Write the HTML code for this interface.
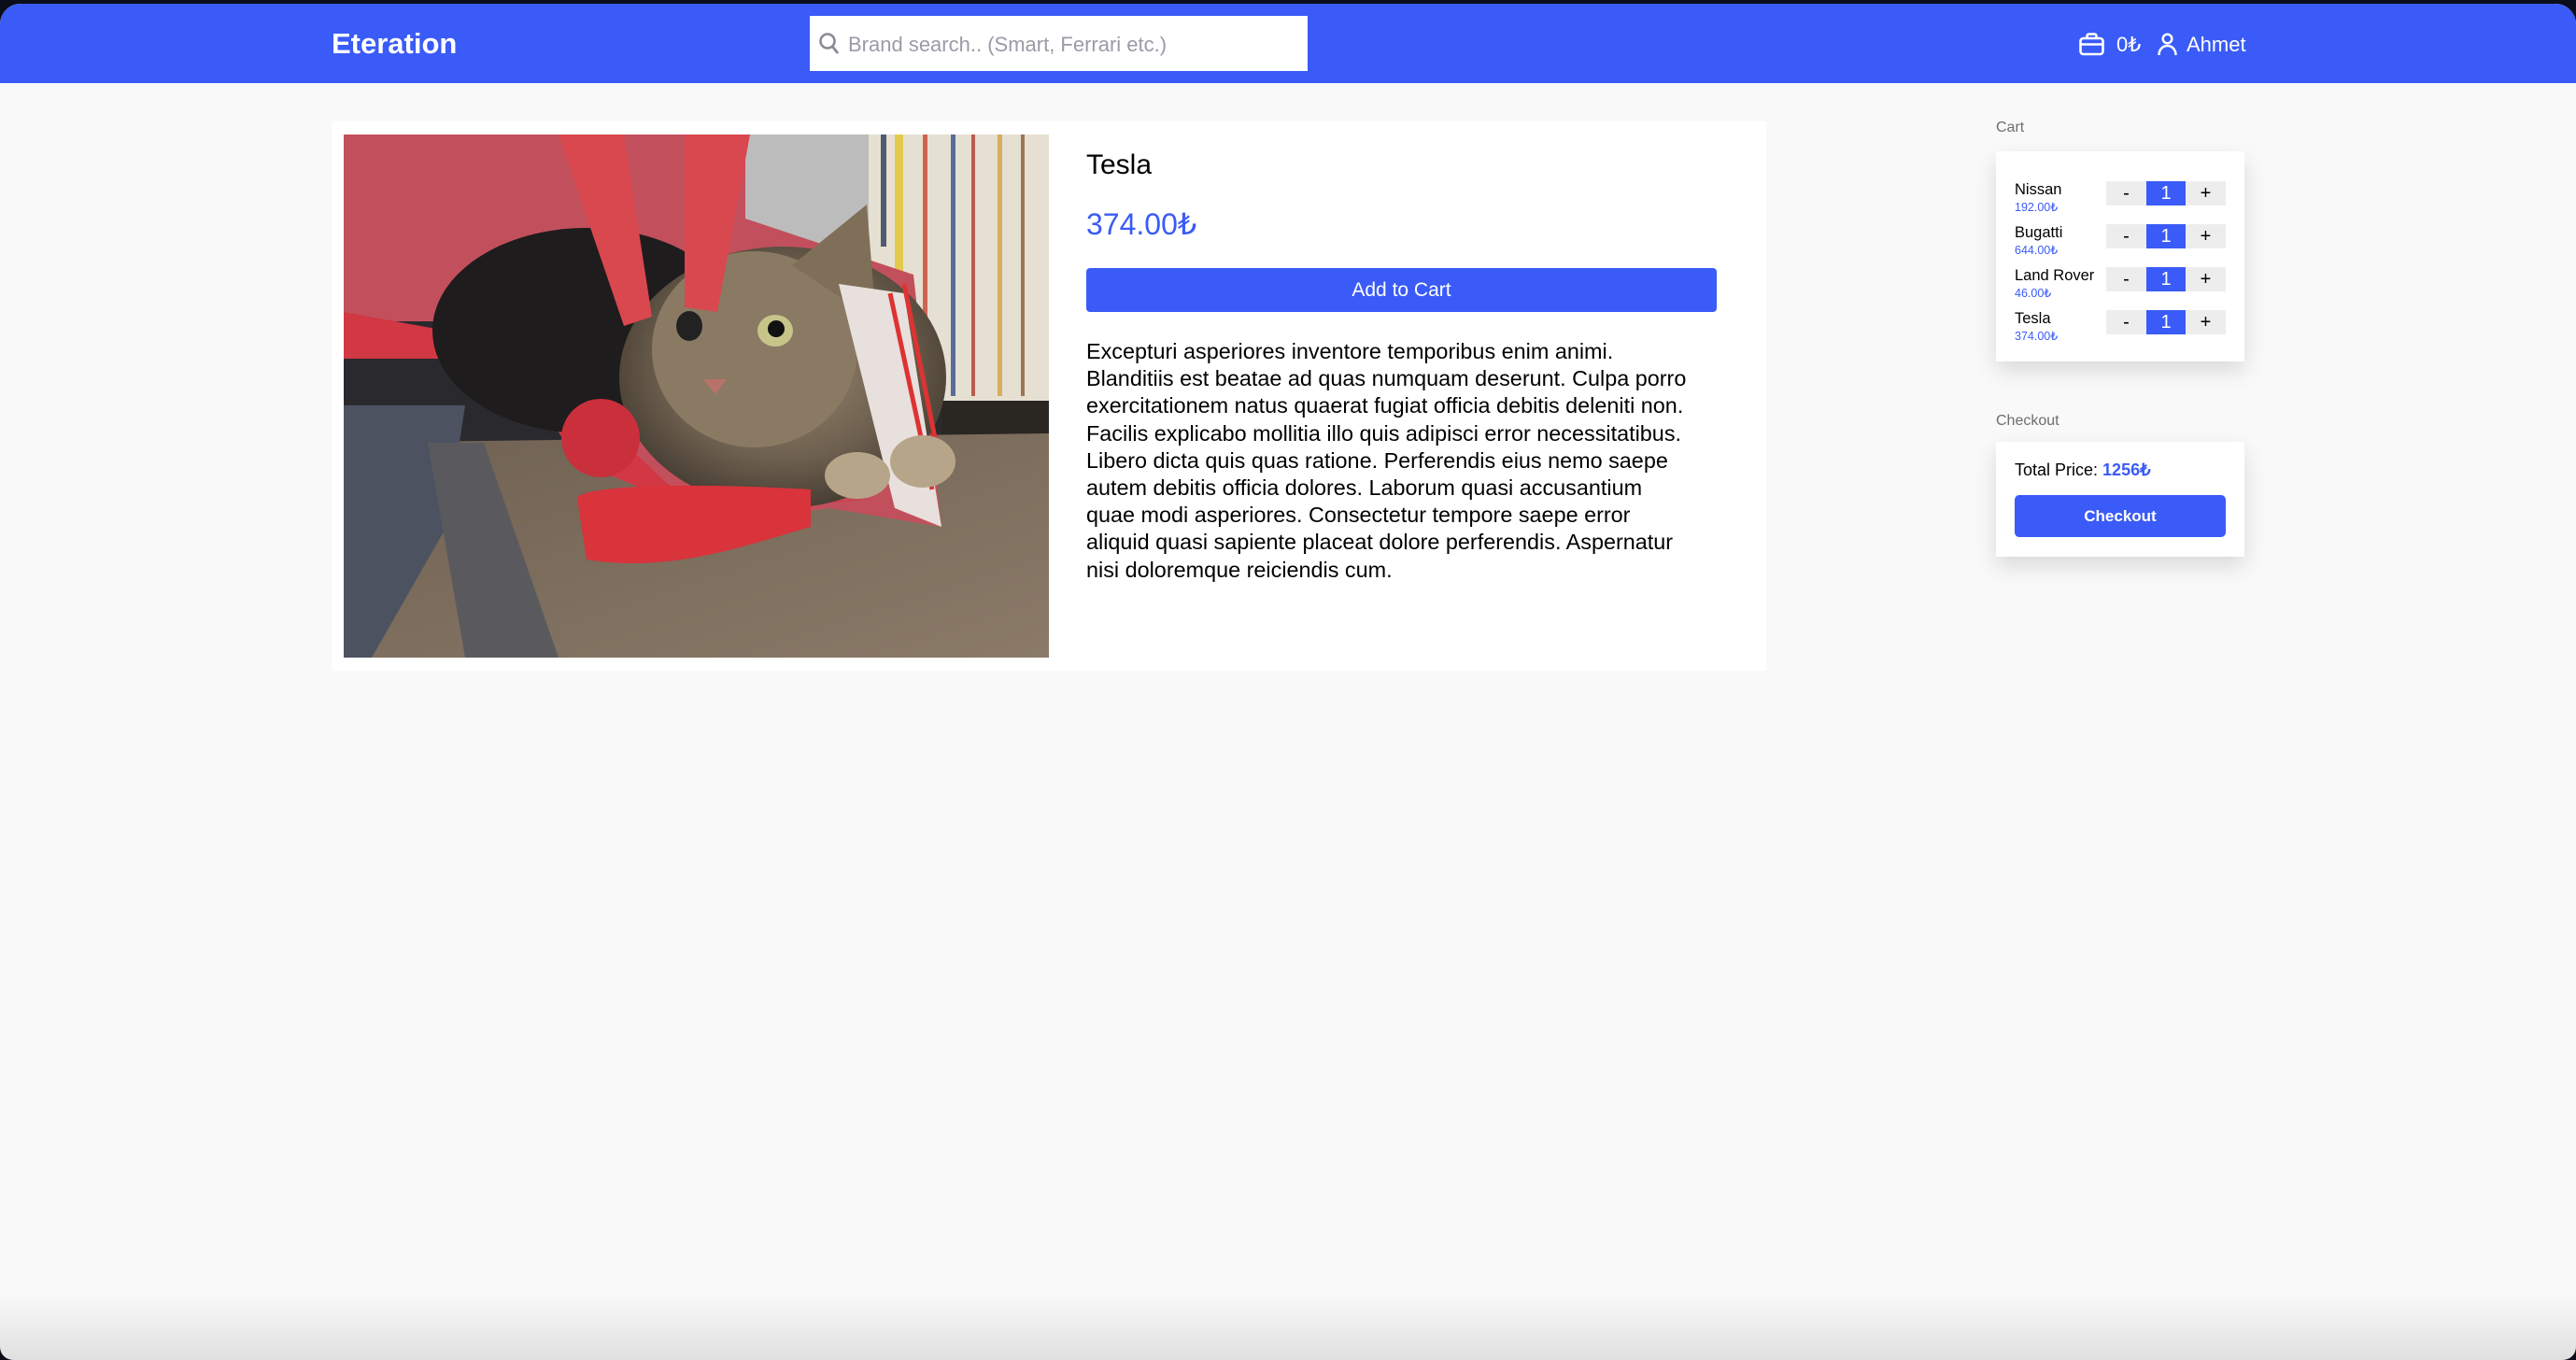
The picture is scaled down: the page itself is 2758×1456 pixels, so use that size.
<!DOCTYPE html>
<html><head><meta charset="utf-8">
<style>
*{margin:0;padding:0;box-sizing:border-box}
html,body{width:2758px;height:1456px;overflow:hidden;background:#0b0d1a}
body{font-family:"Liberation Sans",sans-serif;position:relative}
.win{position:absolute;left:0;top:4px;width:2758px;height:1452px;background:#f9f9f9;border-radius:22px 22px 14px 14px;overflow:hidden}
.hdr{position:absolute;left:0;top:0;width:2758px;height:85px;background:#3a5bf7}
.logo{position:absolute;left:355px;top:25px;color:#fff;font-weight:bold;font-size:31px}
.search{position:absolute;left:867px;top:13px;width:533px;height:59px;background:#fff}
.search span{position:absolute;left:41px;top:18px;font-size:22px;color:#9a9ba6}
.search svg{position:absolute;left:9px;top:17px}
.hv{position:absolute;color:#fff;font-size:22px}
.card{position:absolute;left:355px;top:126px;width:1536px;height:588px;background:#fff}
.img{position:absolute;left:13px;top:14px;width:755px;height:560px;overflow:hidden;background:#333}
.title{position:absolute;left:808px;top:30px;font-size:30px;color:#000}
.price{position:absolute;left:808px;top:91px;font-size:32px;color:#3a5bf7}
.btn{position:absolute;left:808px;top:157px;width:675px;height:47px;background:#3a5bf7;border-radius:4px;color:#fff;font-size:21px;text-align:center;line-height:47px}
.desc{position:absolute;left:808px;top:232px;width:720px;font-size:23.4px;line-height:29.2px;color:#000;white-space:nowrap}
.lbl{position:absolute;left:2137px;font-size:16px;color:#6e6e6e}
.box{position:absolute;left:2137px;width:266px;background:#fff;box-shadow:0 10px 22px rgba(0,0,0,0.13)}
.row{position:absolute;left:20px;width:230px;height:40px}
.nm{position:absolute;left:0;top:0;font-size:16.5px;color:#000;white-space:nowrap}
.pr{position:absolute;left:0;top:20px;font-size:12.5px;color:#3a5bf7}
.q{position:absolute;top:0;height:26px;width:43px;text-align:center;line-height:26px;font-size:20px;background:#eeedee;color:#000}
.tp{position:absolute;left:20px;top:20px;font-size:18px;color:#000}
.cb{position:absolute;left:20px;top:57px;width:226px;height:45px;background:#3a5bf7;border-radius:5px;color:#fff;font-weight:bold;font-size:17px;text-align:center;line-height:45px}
.bot{position:absolute;left:0;bottom:0;width:2758px;height:70px;background:linear-gradient(to bottom,rgba(0,0,0,0),rgba(0,0,0,0.10))}
</style></head><body>
<div class="win">
<div class="hdr">
 <div class="logo">Eteration</div>
 <div class="search"><svg width="24" height="26" viewBox="0 0 24 26"><circle cx="10" cy="10" r="7.5" fill="none" stroke="#8a8b96" stroke-width="2.6"/><line x1="15.5" y1="16" x2="21" y2="23" stroke="#8a8b96" stroke-width="2.8"/></svg><span>Brand search.. (Smart, Ferrari etc.)</span></div>
 <svg style="position:absolute;left:2226px;top:31px" width="27" height="25" viewBox="0 0 27 25"><rect x="1.5" y="6" width="24" height="17" rx="3" fill="none" stroke="#fff" stroke-width="2.6"/><path d="M8.5 6V3.5a2 2 0 0 1 2-2h6a2 2 0 0 1 2 2V6" fill="none" stroke="#fff" stroke-width="2.6"/><line x1="1.5" y1="12.5" x2="25.5" y2="12.5" stroke="#fff" stroke-width="2.4"/></svg>
 <div class="hv" style="left:2266px;top:31px">0₺</div>
 <svg style="position:absolute;left:2310px;top:31px" width="21" height="25" viewBox="0 0 21 25"><circle cx="10.5" cy="6.5" r="4.8" fill="none" stroke="#fff" stroke-width="2.5"/><path d="M1.5 24c0-6 4-10 9-10s9 4 9 10" fill="none" stroke="#fff" stroke-width="2.5"/></svg>
 <div class="hv" style="left:2341px;top:31px">Ahmet</div>
</div>

<div class="card">
 <div class="img">
 <svg width="755" height="560" viewBox="0 0 755 560">
  <defs>
   <radialGradient id="cat" cx="0.5" cy="0.45" r="0.6"><stop offset="0" stop-color="#9a8770"/><stop offset="0.6" stop-color="#6e604f"/><stop offset="1" stop-color="#3d352c"/></radialGradient>
   <linearGradient id="carpet" x1="0" y1="0" x2="1" y2="1"><stop offset="0" stop-color="#6f6152"/><stop offset="1" stop-color="#8b7a68"/></linearGradient>
  </defs>
  <rect width="755" height="560" fill="#2a2a2e"/>
  <rect x="430" y="0" width="140" height="120" fill="#bdbcbd"/>
  <rect x="562" y="0" width="193" height="290" fill="#e6e0d2"/>
  <g opacity="0.8"><rect x="575" y="0" width="6" height="120" fill="#2a3a5a"/><rect x="590" y="0" width="9" height="270" fill="#e4c52a"/><rect x="620" y="0" width="5" height="280" fill="#c9452f"/><rect x="650" y="0" width="5" height="280" fill="#34508a"/><rect x="672" y="0" width="4" height="280" fill="#b03d2c"/><rect x="700" y="0" width="5" height="280" fill="#d8a040"/><rect x="725" y="0" width="4" height="280" fill="#8a5a38"/></g>
  <rect x="640" y="285" width="115" height="40" fill="#2a2622"/>
  <polygon points="0,330 755,320 755,560 0,560" fill="url(#carpet)"/>
  <polygon points="0,290 130,290 110,420 30,560 0,560" fill="#4c5260"/>
  <polygon points="90,330 150,330 230,560 130,560" fill="#5a5a5e"/>
  <path d="M0 0 L430 0 L430 90 L610 150 L640 420 L520 400 L380 420 L250 330 L120 200 L0 200Z" fill="#c2505c"/>
  <path d="M0 190 L110 210 L230 310 L300 330 L380 405 L570 390 L370 400 L250 350 L180 240 L0 240Z" fill="#d23744"/>
  <ellipse cx="260" cy="210" rx="165" ry="110" fill="#1e1c1c"/>
  <ellipse cx="470" cy="260" rx="175" ry="140" fill="url(#cat)"/>
  <ellipse cx="440" cy="230" rx="110" ry="105" fill="#8a7a64"/>
  <path d="M480 140 L560 75 L570 200Z" fill="#7f6e58"/>
  <path d="M530 160 L600 170 L640 420 L590 400Z" fill="#e8e0dc"/>
  <g stroke="#d33" stroke-width="5"><line x1="600" y1="160" x2="640" y2="360"/><line x1="585" y1="170" x2="630" y2="380"/></g>
  <ellipse cx="462" cy="210" rx="19" ry="17" fill="#c7c48a"/><circle cx="463" cy="208" r="9" fill="#111"/>
  <ellipse cx="370" cy="205" rx="14" ry="16" fill="#222"/>
  <path d="M385 262 L410 262 L398 278Z" fill="#b8726a"/>
  <ellipse cx="550" cy="365" rx="35" ry="25" fill="#b7a58a"/><ellipse cx="620" cy="350" rx="35" ry="28" fill="#b7a58a"/>
  <path d="M230 0 L300 0 L330 195 L300 205Z" fill="#d9474f"/>
  <path d="M365 0 L435 0 L400 190 L365 185Z" fill="#d9474f"/>
  <circle cx="275" cy="325" r="42" fill="#c9303c"/>
  <path d="M250 390 C250 380 320 370 500 380 L500 420 C430 440 350 470 260 455Z" fill="#d9333b"/>
 </svg>
 </div>
 <div class="title">Tesla</div>
 <div class="price">374.00₺</div>
 <div class="btn">Add to Cart</div>
 <div class="desc">Excepturi asperiores inventore temporibus enim animi.<br>Blanditiis est beatae ad quas numquam deserunt. Culpa porro<br>exercitationem natus quaerat fugiat officia debitis deleniti non.<br>Facilis explicabo mollitia illo quis adipisci error necessitatibus.<br>Libero dicta quis quas ratione. Perferendis eius nemo saepe<br>autem debitis officia dolores. Laborum quasi accusantium<br>quae modi asperiores. Consectetur tempore saepe error<br>aliquid quasi sapiente placeat dolore perferendis. Aspernatur<br>nisi doloremque reiciendis cum.</div>
</div>

<div class="lbl" style="top:124px">Cart</div>
<div class="box" style="top:158px;height:225px">
 <div class="row" style="top:32px"><div class="nm">Nissan</div><div class="pr">192.00₺</div><div class="q" style="left:98px">-</div><div class="q" style="left:141px;background:#3a5bf7;color:#fff;width:42px">1</div><div class="q" style="left:183px">+</div></div>
 <div class="row" style="top:78px"><div class="nm">Bugatti</div><div class="pr">644.00₺</div><div class="q" style="left:98px">-</div><div class="q" style="left:141px;background:#3a5bf7;color:#fff;width:42px">1</div><div class="q" style="left:183px">+</div></div>
 <div class="row" style="top:124px"><div class="nm">Land Rover</div><div class="pr">46.00₺</div><div class="q" style="left:98px">-</div><div class="q" style="left:141px;background:#3a5bf7;color:#fff;width:42px">1</div><div class="q" style="left:183px">+</div></div>
 <div class="row" style="top:170px"><div class="nm">Tesla</div><div class="pr">374.00₺</div><div class="q" style="left:98px">-</div><div class="q" style="left:141px;background:#3a5bf7;color:#fff;width:42px">1</div><div class="q" style="left:183px">+</div></div>
</div>

<div class="lbl" style="top:438px">Checkout</div>
<div class="box" style="top:469px;height:123px">
 <div class="tp">Total Price: <b style="color:#3a5bf7">1256₺</b></div>
 <div class="cb">Checkout</div>
</div>
<div class="bot"></div>
</div>
</body></html>
